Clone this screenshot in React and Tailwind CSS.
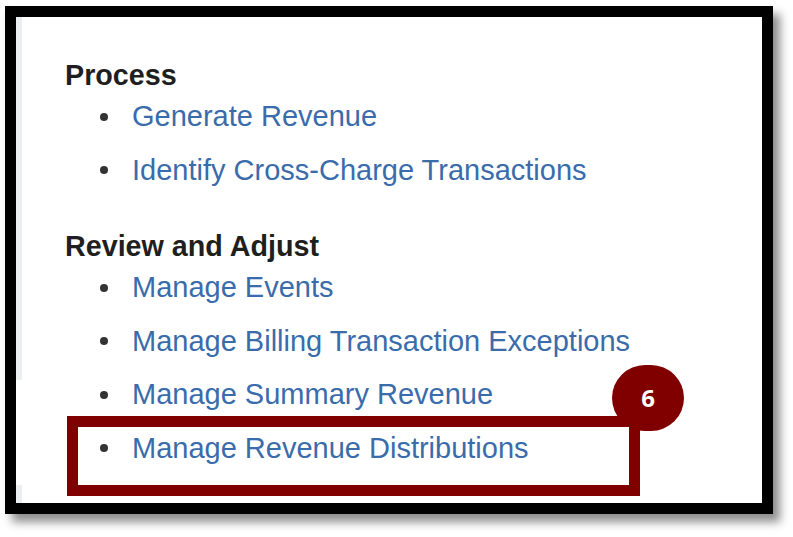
import React from "react";

const sections = [
  {
    title: "Process",
    items: ["Generate Revenue", "Identify Cross-Charge Transactions"],
  },
  {
    title: "Review and Adjust",
    items: [
      "Manage Events",
      "Manage Billing Transaction Exceptions",
      "Manage Summary Revenue",
      "Manage Revenue Distributions",
    ],
  },
];

const App = () => {
  return (
    <div className="w-[793px] h-[537px] bg-white pl-[5px] pt-[6px] overflow-hidden">
      {/* framed screenshot */}
      <div className="relative w-[768px] h-[508px] border-[11px] border-black bg-white shadow-[7px_8px_9px_rgba(0,0,0,0.45)] flex">
        <div className="w-[6px] h-full flex flex-col">
          <div className="h-[363px] bg-[#eceef0]" />
          <div className="flex-1 bg-white" />
          <div className="h-[18px] bg-[#eceef0]" />
        </div>

        <div
          className="flex-1 pl-[43px] pt-[44px]"
          style={{ fontFamily: '"Liberation Sans", Arial, sans-serif' }}
        >
          {sections.map((section, i) => (
            <div key={section.title} className={i > 0 ? "mt-[35px]" : ""}>
              <h2 className="text-[28.7px] leading-[29px] font-bold text-[#1f1f1f]">
                {section.title}
              </h2>
              <ul>
                {section.items.map((item) => (
                  <li key={item} className="flex items-center h-[53.5px] pl-[35px]">
                    <span className="w-[8px] h-[8px] rounded-full bg-[#333333] mr-[24px]" />
                    <span className="text-[29px] leading-[53.5px] text-[#3a6cab]">{item}</span>
                  </li>
                ))}
              </ul>
            </div>
          ))}
        </div>

        {/* callout annotation */}
        <div className="absolute left-[51px] top-[399px] w-[573px] h-[80px] border-[11px] border-[#800000]" />
        <div
          className="absolute left-[596px] top-[348px] w-[72px] h-[66px] rounded-full bg-[#800000] flex items-center justify-center text-white text-[24px] font-bold"
          style={{ fontFamily: '"Open Sans", sans-serif' }}
        >
          6
        </div>
      </div>
    </div>
  );
};

export default App;
